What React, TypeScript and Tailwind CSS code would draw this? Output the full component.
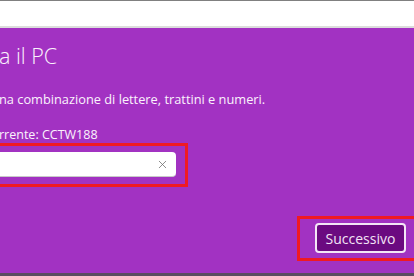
import { X } from "lucide-react";

const App = () => {
  return (
    <div className="w-[414px] h-[276px] overflow-hidden flex flex-col font-['Open_Sans',sans-serif] bg-white">
      {/* strip above the dialog */}
      <div className="h-[28px] shrink-0 border-t border-[#808080] border-b-2 border-b-[#dcdcdc] bg-white" />

      <div className="flex-1 flex flex-col bg-[#a232c2] text-[#fbf2fc] border-b-[3px] border-b-[#5c4a60]">
        <h1 className="mt-[15px] -ml-[1px] text-[21.5px] leading-[26px] font-light">
          a il PC
        </h1>
        <p className="mt-[21px] -ml-[1px] text-[12.8px] leading-[18px]">
          na combinazione di lettere, trattini e numeri.
        </p>
        <p className="mt-[18px] -ml-[1px] text-[12.5px] leading-[18px]">
          rrente: CCTW188
        </p>

        {/* input, highlighted */}
        <div className="-mt-[1px] -ml-[10px] w-[198px] h-[44px] border-[3px] border-[#f01a22] pt-[6px] pr-[9px] pb-[7px]">
          <div className="h-[25px] rounded-[4px] bg-white border-b border-[#c9c9c9] flex items-center justify-end pr-[7px]">
            <X className="w-[13px] h-[13px] text-[#6a6a6a]" strokeWidth={1.4} />
          </div>
        </div>

        {/* next button, highlighted */}
        <div className="mt-[29px] ml-[297px] w-[130px] h-[45px] border-[3px] border-[#f01a22] pl-[15px] pt-[4px]">
          <button className="w-[91px] h-[30px] rounded-[4px] border-2 border-[#f4e6f6] bg-[#6b0a80] text-[14px] text-[#f3e3f5] flex items-center justify-center">
            Successivo
          </button>
        </div>
      </div>
    </div>
  );
};

export default App;
